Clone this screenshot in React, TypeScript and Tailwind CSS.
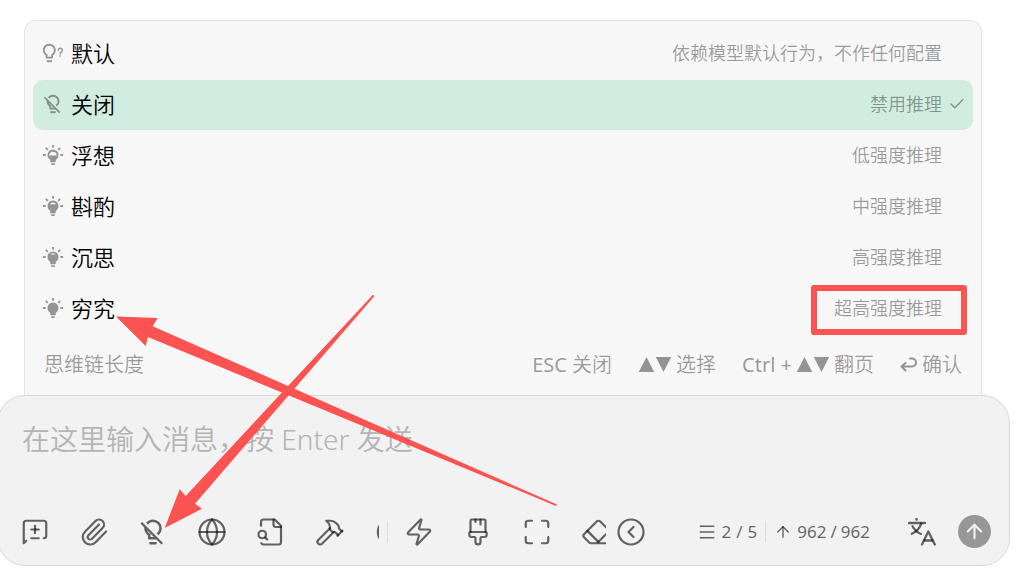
import type { ReactNode } from "react";
import {
  ArrowUp,
  Check,
  CircleChevronLeft,
  Eraser,
  Globe,
  Hammer,
  Maximize,
  Menu,
  Paperclip,
  Zap,
} from "lucide-react";

const BULB_ON =
  "M12 6A6 6 0 0 1 18 12C18 14.22 16.79 16.16 15 17.2V19A1 1 0 0 1 14 20H10A1 1 0 0 1 9 19V17.2C7.21 16.16 6 14.22 6 12A6 6 0 0 1 12 6M14 21V22A1 1 0 0 1 13 23H11A1 1 0 0 1 10 22V21H14M20 11H23V13H20V11M1 11H4V13H1V11M13 1V4H11V1H13M4.92 3.5L7.05 5.64L5.63 7.05L3.5 4.93L4.92 3.5M16.95 5.63L19.07 3.5L20.5 4.93L18.37 7.05L16.95 5.63Z";

// Hollow part at the top of the glass, smaller as the level rises
const BULB_LOW = BULB_ON + "M8 12.5A4 4 0 1 1 16 12.5Z";
const BULB_MEDIUM = BULB_ON + "M8.54 10.2A4 4 0 0 1 15.46 10.2Z";
const BULB_HIGH = BULB_ON + "M9.2 9.2A4 4 0 0 1 14.8 9.2Z";

const BULB_OFF =
  "M12 2C9.76 2 7.78 3.05 6.5 4.68L7.93 6.11C8.84 4.84 10.32 4 12 4A5 5 0 0 1 17 9C17 10.68 16.16 12.16 14.89 13.06L16.31 14.5C17.95 13.22 19 11.24 19 9A7 7 0 0 0 12 2M3.28 4L2 5.27L5.04 8.3C5 8.53 5 8.76 5 9C5 11.38 6.19 13.47 8 14.74V17A1 1 0 0 0 9 18H14.73L18.73 22L20 20.72L3.28 4M7.23 10.5L12.73 16H10V13.58C8.68 13 7.66 11.88 7.23 10.5M9 20V21A1 1 0 0 0 10 22H14A1 1 0 0 0 15 21V20H9Z";

const BULB_QUESTION =
  "M8 2C11.9 2 15 5.1 15 9C15 11.4 13.8 13.5 12 14.7V17C12 17.6 11.6 18 11 18H5C4.4 18 4 17.6 4 17V14.7C2.2 13.5 1 11.4 1 9C1 5.1 4.1 2 8 2M5 21V20H11V21C11 21.6 10.6 22 10 22H6C5.4 22 5 21.6 5 21M8 4C5.2 4 3 6.2 3 9C3 11.1 4.2 12.8 6 13.6V16H10V13.6C11.8 12.8 13 11.1 13 9C13 6.2 10.8 4 8 4M20.5 14.5V16H19V14.5H20.5M18.5 9.5H17V9C17 7.3 18.3 6 20 6S23 7.3 23 9C23 10 22.5 10.9 21.7 11.4L21.4 11.6C20.8 12 20.5 12.6 20.5 13.3V13.5H19V13.3C19 12.1 19.6 11 20.6 10.4L20.9 10.2C21.3 9.9 21.5 9.5 21.5 9C21.5 8.2 20.8 7.5 20 7.5S18.5 8.2 18.5 9V9.5Z";

interface Option {
  label: string;
  description: string;
  icon: string;
  selected?: boolean;
  marked?: boolean;
}

const options: Option[] = [
  { label: "默认", description: "依赖模型默认行为，不作任何配置", icon: BULB_QUESTION },
  { label: "关闭", description: "禁用推理", icon: BULB_OFF, selected: true },
  { label: "浮想", description: "低强度推理", icon: BULB_LOW },
  { label: "斟酌", description: "中强度推理", icon: BULB_MEDIUM },
  { label: "沉思", description: "高强度推理", icon: BULB_HIGH },
  { label: "穷究", description: "超高强度推理", icon: BULB_ON, marked: true },
];

function BulbIcon({ path, className }: { path: string; className?: string }) {
  return (
    <svg viewBox="0 0 24 24" fill="currentColor" fillRule="evenodd" className={className}>
      <path d={path} />
    </svg>
  );
}

function LineIcon({ paths, children }: { paths: string[]; children?: ReactNode }) {
  return (
    <svg
      viewBox="0 0 24 24"
      fill="none"
      stroke="currentColor"
      strokeWidth={1.75}
      strokeLinecap="round"
      strokeLinejoin="round"
      className="size-[30px]"
    >
      {paths.map((d) => (
        <path key={d} d={d} />
      ))}
      {children}
    </svg>
  );
}

function TranslateIcon() {
  return (
    <svg
      viewBox="0 0 28 28"
      fill="none"
      stroke="currentColor"
      strokeWidth={2.3}
      strokeLinecap="round"
      strokeLinejoin="round"
      className="size-7"
    >
      <path d="M8.5 1.2v.3" strokeWidth={2.6} />
      <path d="M1 5h16" />
      <path d="M13.2 5.5C12 10 8.5 13.5 3.8 15.8" />
      <path d="M4.5 8.2C6.5 12 9.5 14.5 13 16" />
      <path d="m14 26.5 6.3-13 6.5 13" />
      <path d="M16.5 22.5h7.800" />
    </svg>
  );
}

function ToolButton({ label, children }: { label: string; children: ReactNode }) {
  return (
    <button
      type="button"
      aria-label={label}
      className="flex size-[30px] shrink-0 items-center justify-center"
    >
      {children}
    </button>
  );
}

function OptionRow({ option }: { option: Option }) {
  return (
    <button
      type="button"
      role="option"
      aria-selected={!!option.selected}
      className={
        option.selected
          ? "relative flex h-[50px] w-full items-center rounded-[10px] bg-[#d1ede1] pr-2 pb-0.5 pl-[9px]"
          : "relative flex h-[50px] w-full items-center rounded-[10px] pr-2 pb-0.5 pl-[9px]"
      }
    >
      <BulbIcon path={option.icon} className="mr-[7px] size-[22px] text-black/40" />
      <span className="text-[22px] text-black">{option.label}</span>
      <span className="ml-auto text-[18px] text-black/40">{option.description}</span>
      <span className="ml-1.5 flex w-[17px] justify-center text-black/40">
        {option.selected ? <Check className="size-[18px] shrink-0" strokeWidth={1.8} /> : null}
      </span>
      {option.marked ? (
        <span className="absolute top-px right-1.5 -bottom-px w-[156px] rounded-[3px] border-[6px] border-[#fb5252]" />
      ) : null}
    </button>
  );
}

function Triangles() {
  return (
    <svg viewBox="0 0 34 16" fill="currentColor" className="h-4 w-[34px]">
      <path d="M8.500 0 16.200 15H.8Z" />
      <path d="M25.500 15 17.800 0h15.400Z" />
    </svg>
  );
}

function ReasoningPanel() {
  return (
    <section className="mr-[35px] ml-6 rounded-t-[12px] border border-b-0 border-[#e4e4e4] bg-[#f7f7f7] px-2 pt-2">
      <div role="listbox" aria-label="思维链长度" className="flex flex-col gap-px">
        {options.map((option) => (
          <OptionRow key={option.label} option={option} />
        ))}
      </div>
      <div className="flex h-[61px] items-center pr-[11px] pl-[11px] text-[20px] whitespace-nowrap text-black/40">
        <span>思维链长度</span>
        <div className="ml-auto flex items-center gap-[26px]">
          <span>
            <span className="font-normal">ESC</span> 关闭
          </span>
          <span className="flex items-center gap-1">
            <Triangles />
            选择
          </span>
          <span className="flex items-center gap-1">
            <span className="font-normal">Ctrl +</span>
            <Triangles />
            翻页
          </span>
          <span className="flex items-center gap-1">
            <svg
              viewBox="0 0 18 18"
              fill="none"
              stroke="currentColor"
              strokeWidth={2}
              strokeLinecap="round"
              strokeLinejoin="round"
              className="size-[18px]"
            >
              <path d="M5.5 7 1.5 10.5l4 4M2 10.5h10a4 4 0 0 0 0-8h-2" />
            </svg>
            确认
          </span>
        </div>
      </div>
    </section>
  );
}

function Composer() {
  return (
    <section className="mr-[7px] -ml-[3px] rounded-[28px] border border-[#d8d8d8] bg-[#f2f2f2]">
      <textarea
        aria-label="消息"
        rows={2}
        placeholder="在这里输入消息，按 Enter 发送"
        className="block h-[104px] w-full resize-none bg-transparent px-6 pt-[22px] text-[28px] leading-[42px] outline-none placeholder:text-[#b4b4b4]"
      />
      <div className="flex h-[65px] items-center pr-[18px] pb-0.5 pl-[22px] text-black/60">
        <div className="flex w-[359px] shrink-0 gap-[29px] overflow-hidden">
          <ToolButton label="新话题">
            <LineIcon
              paths={[
                "m5 19-2 2V5a2 2 0 0 1 2-2h14a2 2 0 0 1 2 2v10a2 2 0 0 1-2 2",
                "M9 10h6",
                "M12 7v6",
                "M9 17h6",
              ]}
            />
          </ToolButton>
          <ToolButton label="附件">
            <Paperclip className="size-[30px]" strokeWidth={1.75} />
          </ToolButton>
          <ToolButton label="思维链长度">
            <BulbIcon path={BULB_OFF} className="size-[30px]" />
          </ToolButton>
          <ToolButton label="网络搜索">
            <Globe className="size-[30px]" strokeWidth={1.75} />
          </ToolButton>
          <ToolButton label="知识库">
            <LineIcon
              paths={[
                "M14 2v4a2 2 0 0 0 2 2h4",
                "M4.268 21a2 2 0 0 0 1.727 1H18a2 2 0 0 0 2-2V7l-5-5H6a2 2 0 0 0-2 2v3",
                "m9 18-1.5-1.5",
              ]}
            >
              <circle cx="5" cy="14" r="3" />
            </LineIcon>
          </ToolButton>
          <ToolButton label="工具">
            <Hammer className="size-[30px]" strokeWidth={1.75} />
          </ToolButton>
          <ToolButton label="模型">
            <LineIcon paths={["M4 7.5c-1 2.500-1 6.500 0 9"]} />
          </ToolButton>
        </div>
        <span className="ml-2 h-[21px] w-px shrink-0 bg-[#dcdcdc]" />
        <div className="ml-4 flex w-[202px] shrink-0 gap-[29px] overflow-hidden">
          <ToolButton label="快捷短语">
            <Zap className="size-[30px]" strokeWidth={1.75} />
          </ToolButton>
          <ToolButton label="清空消息">
            <LineIcon
              paths={[
                "M10 2v2",
                "M14 2v4",
                "M17 2a1 1 0 0 1 1 1v9H6V3a1 1 0 0 1 1-1z",
                "M6 12a1 1 0 0 0-1 1v1a2 2 0 0 0 2 2h2a1 1 0 0 1 1 1v2.9a2 2 0 1 0 4 0V17a1 1 0 0 1 1-1h2a2 2 0 0 0 2-2v-1a1 1 0 0 0-1-1",
              ]}
            />
          </ToolButton>
          <ToolButton label="展开">
            <Maximize className="size-[30px]" strokeWidth={1.75} />
          </ToolButton>
          <ToolButton label="清除上下文">
            <Eraser className="size-[30px]" strokeWidth={1.75} />
          </ToolButton>
        </div>
        <div className="ml-2.5 flex">
          <ToolButton label="收起">
            <CircleChevronLeft className="size-[30px]" strokeWidth={1.75} />
          </ToolButton>
        </div>
        <div className="ml-auto flex items-center text-[17px] font-normal whitespace-nowrap">
          <Menu className="size-5" strokeWidth={1.8} />
          <span className="ml-[5px] flex gap-[5px]">
            <span>2</span>
            <span>/</span>
            <span>5</span>
          </span>
          <span className="mx-2 h-[21px] w-px bg-[#dcdcdc]" />
          <ArrowUp className="size-[18px]" strokeWidth={1.8} />
          <span className="ml-[5px] flex gap-1">
            <span>962</span>
            <span>/</span>
            <span>962</span>
          </span>
        </div>
        <div className="ml-[37px] flex items-center gap-[21px]">
          <ToolButton label="翻译">
            <TranslateIcon />
          </ToolButton>
          <button
            type="button"
            aria-label="发送"
            className="flex size-[33px] items-center justify-center rounded-full bg-[#979797] text-[#f2f2f2]"
          >
            <ArrowUp className="size-[23px]" strokeWidth={2.2} />
          </button>
        </div>
      </div>
    </section>
  );
}

export default function App() {
  return (
    <main className="relative min-h-screen overflow-hidden bg-white pt-5 font-['Noto_Sans','Noto_Sans_CJK_SC',sans-serif] font-[350]">
      <ReasoningPanel />
      <Composer />

      {/* Annotation arrows */}
      <svg
        width="600"
        height="576"
        viewBox="0 0 600 576"
        fill="#fb5252"
        aria-hidden="true"
        className="pointer-events-none absolute top-0 left-0"
      >
        <path d="M116 316.5 157.7 318 152.7 326.3 557 504.5 556 506 148 337 145.7 346Z" />
        <path d="M164.7 528 179.7 489.3 185.7 496 373 294.7 374.5 296 195 503.7 202 508.7Z" />
      </svg>
    </main>
  );
}
